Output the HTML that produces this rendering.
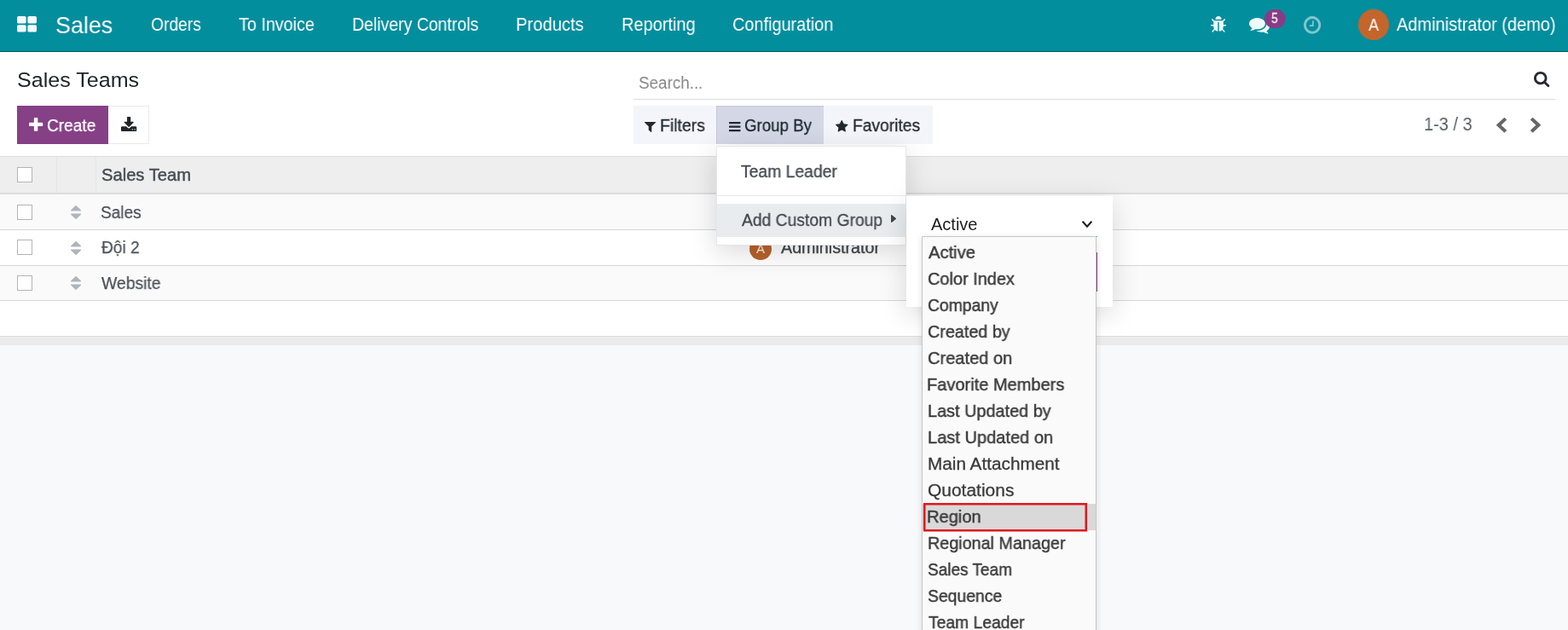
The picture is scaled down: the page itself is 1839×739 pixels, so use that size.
<!DOCTYPE html>
<html lang="en">
<head>
<meta charset="utf-8">
<title>Sales Teams</title>
<style>
*{box-sizing:border-box;margin:0;padding:0}
html,body{width:1839px;height:739px;overflow:hidden}
body{position:relative;background:#f8f9fa;font-family:"Liberation Sans",sans-serif;font-size:19.5px;color:#4c4c4c}
.abs,.ic{position:absolute}
.ic{display:block;overflow:visible}
.t{position:absolute;white-space:nowrap;line-height:1;transform-origin:0 50%;will-change:transform}
#nav{position:absolute;left:0;top:0;width:1839px;height:61px;background:#038e9e;border-bottom:1px solid #075c66}
#cp{position:absolute;left:0;top:61px;width:1839px;height:122px;background:#fff}
.hdr{position:absolute;left:0;top:183px;width:1839px;height:45px;background:#eeeeee;border-top:1px solid #dcdcdc;border-bottom:2px solid #dcdcdc}
.colsep{position:absolute;top:184px;width:1px;height:42px;background:#e5e5e5}
.row{position:absolute;left:0;width:1839px;border-bottom:1px solid #d6d6d6}
.row.odd{background:#fafafa}
.row.even{background:#fff}
.cb{position:absolute;left:20px;width:18px;height:18px;border:1px solid #b4b4b4;background:#fff}
.tfill{position:absolute;left:0;top:353px;width:1839px;height:41px;background:#fff}
.foot{position:absolute;left:0;top:394px;width:1839px;height:11px;background:#ebebeb;border-top:1px solid #dcdcdc}
.btn-create{position:absolute;left:20px;top:124px;width:107px;height:45px;background:#864086}
.btn-dl{position:absolute;left:127px;top:124px;width:48px;height:45px;background:#fff;border:1px solid #e9e9ea;border-left:0}
.sline{position:absolute;left:743px;top:116px;width:1081px;height:1px;background:#dcdcdc}
.fb{position:absolute;top:124px;height:45px;background:#f4f5fa}
.fb.on{background:#d4d8e6;box-shadow:inset 1px 1px 1px rgba(0,0,0,.07)}
.avatar{position:absolute;border-radius:50%;background:#c4652c}
.badge{position:absolute;left:1482.5px;top:11.4px;width:25px;height:21.6px;border-radius:11px;background:#873d86}
.dd{position:absolute;left:840px;top:171px;width:223px;height:117px;background:#fff;border:1px solid #e4e6ea;box-shadow:0 8px 30px rgba(0,0,0,.15)}
.dd .div{position:absolute;left:0;top:57px;width:221px;height:1px;background:#e6e8eb}
.dd .hl{position:absolute;left:0;top:67px;width:221px;height:39px;background:#e9ecef}
.sub{position:absolute;left:1062.5px;top:229.5px;width:242.5px;height:130.5px;background:#fff;box-shadow:0 8px 30px rgba(0,0,0,.15)}
.selline{position:absolute;left:1080.5px;top:277px;width:206.5px;height:1px;background:#5aa5a2}
.apply{position:absolute;left:1081px;top:296px;width:206px;height:46px;background:#864086}
.pop{position:absolute;left:1081px;top:277px;width:205px;height:470px;background:#fafafa;border:1px solid #c6c6c6;box-shadow:0 2px 8px rgba(0,0,0,.12)}
.ohl{position:absolute;left:1082px;top:591px;width:203px;height:31px;background:#d9d9d9}
.red{position:absolute;left:1082.75px;top:589.75px;width:192px;height:33.5px;overflow:visible}
</style>
</head>
<body>
<div id="nav">
  <svg class="ic" style="left:20.0px;top:19.3px;" width="23.0" height="18.6" viewBox="64 128 1664 1408" preserveAspectRatio="none"><path fill="#f4fbfb" d="M832 1024v384q0 52-38 90t-90 38h-512q-52 0-90-38t-38-90v-384q0-52 38-90t90-38h512q52 0 90 38t38 90zm0-768v384q0 52-38 90t-90 38h-512q-52 0-90-38t-38-90v-384q0-52 38-90t90-38h512q52 0 90 38t38 90zm896 768v384q0 52-38 90t-90 38h-512q-52 0-90-38t-38-90v-384q0-52 38-90t90-38h512q52 0 90 38t38 90zm0-768v384q0 52-38 90t-90 38h-512q-52 0-90-38t-38-90v-384q0-52 38-90t90-38h512q52 0 90 38t38 90z"/></svg>
  <span class="t" style="left:64.58px;top:16px;font-size:28px;color:#ffffff;transform:scaleX(0.9592)">Sales</span>
  <span class="t" style="left:177.06px;top:19px;font-size:21.5px;color:#ffffff;transform:scaleX(0.8954)">Orders</span>
  <span class="t" style="left:280.49px;top:19px;font-size:21.5px;color:#ffffff;transform:scaleX(0.9184)">To Invoice</span>
  <span class="t" style="left:413.40px;top:19px;font-size:21.5px;color:#ffffff;transform:scaleX(0.9052)">Delivery Controls</span>
  <span class="t" style="left:605.36px;top:19px;font-size:21.5px;color:#ffffff;transform:scaleX(0.9399)">Products</span>
  <span class="t" style="left:728.93px;top:19px;font-size:21.5px;color:#ffffff;transform:scaleX(0.9293)">Reporting</span>
  <span class="t" style="left:858.88px;top:19px;font-size:21.5px;color:#ffffff;transform:scaleX(0.9247)">Configuration</span>
  <svg class="ic" style="left:1420.2px;top:18.8px;" width="18.1" height="18.8" viewBox="96 64 1600 1568" preserveAspectRatio="none"><path fill="#eef9fa" d="M1696 960q0 26-19 45t-45 19h-224q0 171-67 290l208 209q19 19 19 45t-19 45q-18 19-45 19t-45-19l-198-197q-5 5-15 13t-42 28.500-65 36.500-82 29-97 13v-896h-128v896q-51 0-101.500-13.500t-87-33-66-39-43.500-32.500l-15-14-183 207q-20 21-48 21-24 0-43-16-19-18-20.500-44.500t15.500-46.500l202-227q-58-114-58-274h-224q-26 0-45-19t-19-45 19-45 45-19h224v-294l-173-173q-19-19-19-45t19-45 45-19 45 19l173 173h844l173-173q19-19 45-19t45 19 19 45-19 45l-173 173v294h224q26 0 45 19t19 45zm-480-576h-640q0-133 93.500-226.500t226.500-93.500 226.500 93.500 93.500 226.500z"/></svg>
  <svg class="ic" style="left:1465.0px;top:21.2px;" width="24.0" height="18.4" viewBox="0 256 1792 1408.111083984375" preserveAspectRatio="none"><path fill="#eef9fa" d="M1408 768q0 139-94 257t-256.500 186.500-353.500 68.500q-86 0-176-16-124 88-278 128-36 9-86 16h-3q-11 0-20.500-8t-11.500-21q-1-3-1-6.500t.5-6.500 2-6l2.500-5 3.500-5.500 4-5 4.500-5 4-4.500q5-6 23-25t26-29.500 22.500-29 25-38.500 20.500-44q-124-72-195-177t-71-224q0-139 94-257t256.500-186.500 353.500-68.500 353.500 68.500 256.500 186.500 94 257zm384 256q0 120-71 224.500t-195 176.500q10 24 20.500 44t25 38.500 22.500 29 26 29.500 23 25q1 1 4 4.500t4.500 5 4 5 3.500 5.500l2.500 5 2 6 .5 6.500-1 6.500q-3 14-13 22t-22 7q-50-7-86-16-154-40-278-128-90 16-176 16-271 0-472-132 58 4 88 4 161 0 309-45t264-129q125-92 192-212t67-254q0-77-23-152 129 71 204 178t75 230z"/></svg>
  <div class="badge"></div>
  <span class="t" style="left:1491.06px;top:14px;font-size:16px;color:#f6eaf4;transform:scaleX(0.8650);-webkit-text-stroke:0.3px #f6eaf4">5</span>
  <svg class="ic" style="left:1528.6px;top:19.3px;opacity:.5" width="20.2" height="20.7" viewBox="128 128 1536 1536" preserveAspectRatio="none"><path fill="#ffffff" d="M1024 544v448q0 14-9 23t-23 9h-320q-14 0-23-9t-9-23v-64q0-14 9-23t23-9h224v-352q0-14 9-23t23-9h64q14 0 23 9t9 23zm416 352q0-148-73-273t-198-198-273-73-273 73-198 198-73 273 73 273 198 198 273 73 273-73 198-198 73-273zm224 0q0 209-103 385.500t-279.500 279.500-385.500 103-385.500-103-279.500-279.500-103-385.500 103-385.500 279.500-279.500 385.500-103 385.500 103 279.500 279.500 103 385.500z"/></svg>
  <div class="avatar" style="left:1593px;top:11px;width:35.5px;height:36px"></div>
  <span class="t" style="left:1604.99px;top:20px;font-size:19.5px;color:#ffffff;transform:scaleX(0.9327)">A</span>
  <span class="t" style="left:1637.50px;top:19px;font-size:21.5px;color:#ffffff;transform:scaleX(0.9299)">Administrator (demo)</span>
</div>
<div id="cp"></div>
<span class="t" style="left:20.14px;top:82px;font-size:24.5px;color:#212529;transform:scaleX(1.0232)">Sales Teams</span>
<div class="btn-create"></div>
<svg class="ic" style="left:34.4px;top:138.4px;" width="16.2" height="15.8" viewBox="192 128 1408 1408" preserveAspectRatio="none"><path fill="#ffffff" d="M1600 736v192q0 40-28 68t-68 28h-416v416q0 40-28 68t-68 28h-192q-40 0-68-28t-28-68v-416h-416q-40 0-68-28t-28-68v-192q0-40 28-68t68-28h416v-416q0-40 28-68t68-28h192q40 0 68 28t28 68v416h416q40 0 68 28t28 68z"/></svg>
<span class="t" style="left:55.06px;top:137px;font-size:20px;color:#ffffff;transform:scaleX(0.9538);-webkit-text-stroke:0.25px #ffffff">Create</span>
<div class="btn-dl"></div>
<svg class="ic" style="left:141.75px;top:137.0px;" width="18.25" height="17.0" viewBox="64 0 1664 1536" preserveAspectRatio="none"><path fill="#212529" d="M1344 1344q0-26-19-45t-45-19-45 19-19 45 19 45 45 19 45-19 19-45zm256 0q0-26-19-45t-45-19-45 19-19 45 19 45 45 19 45-19 19-45zm128-224v320q0 40-28 68t-68 28h-1472q-40 0-68-28t-28-68v-320q0-40 28-68t68-28h465l135 136q58 56 136 56t136-56l136-136h464q40 0 68 28t28 68zm-325-569q17 41-14 70l-448 448q-18 19-45 19t-45-19l-448-448q-31-29-14-70 17-39 59-39h256v-448q0-26 19-45t45-19h256q26 0 45 19t19 45v448h256q42 0 59 39z"/></svg>
<span class="t" style="left:749.14px;top:88px;font-size:19.5px;color:#858585;transform:scaleX(0.9659)">Search...</span>
<svg class="ic" style="left:1798.6px;top:84.4px;" width="18.3" height="18.1" viewBox="64 128 1664 1664" preserveAspectRatio="none"><path fill="#252b31" d="M1216 832q0-185-131.500-316.500t-316.500-131.500-316.500 131.500-131.500 316.500 131.500 316.500 316.500 131.500 316.500-131.500 131.500-316.500zm512 832q0 52-38 90t-90 38q-54 0-90-38l-343-342q-179 124-399 124-143 0-273.500-55.500t-225-150-150-225-55.500-273.500 55.500-273.500 150-225 225-150 273.500-55.500 273.500 55.500 225 150 150 225 55.500 273.500q0 220-124 399l343 343q37 37 37 90z"/></svg>
<div class="sline"></div>
<div class="fb" style="left:743px;width:97px"></div>
<div class="fb on" style="left:840px;width:126px"></div>
<div class="fb" style="left:966px;width:128px"></div>
<svg class="ic" style="left:756.0px;top:142.5px;" width="13.0" height="12.0" viewBox="190.9791717529297 256 1410.041748046875 1408" preserveAspectRatio="none"><path fill="#212930" d="M1595 295q17 41-14 70l-493 493v742q0 42-39 59-13 5-25 5-27 0-45-19l-256-256q-19-19-19-45v-486l-493-493q-31-29-14-70 17-39 59-39h1280q42 0 59 39z"/></svg>
<span class="t" style="left:774.15px;top:137px;font-size:20px;color:#212930;transform:scaleX(0.9708);-webkit-text-stroke:0.3px #212930">Filters</span>
<svg class="ic" style="left:854.5px;top:142.7px;" width="13.5" height="11.2" viewBox="128 256 1536 1280" preserveAspectRatio="none"><path fill="#212930" d="M1664 1344v128q0 26-19 45t-45 19h-1408q-26 0-45-19t-19-45v-128q0-26 19-45t45-19h1408q26 0 45 19t19 45zm0-512v128q0 26-19 45t-45 19h-1408q-26 0-45-19t-19-45v-128q0-26 19-45t45-19h1408q26 0 45 19t19 45zm0-512v128q0 26-19 45t-45 19h-1408q-26 0-45-19t-19-45v-128q0-26 19-45t45-19h1408q26 0 45 19t19 45z"/></svg>
<span class="t" style="left:873.08px;top:137px;font-size:20px;color:#212930;transform:scaleX(0.9341);-webkit-text-stroke:0.3px #212930">Group By</span>
<svg class="ic" style="left:979.5px;top:141.2px;" width="14.5" height="13.5" viewBox="64 32 1664 1587" preserveAspectRatio="none"><path fill="#212930" d="M1728 647q0 22-26 48l-363 354 86 500q1 7 1 20 0 21-10.500 35.500t-30.500 14.500q-19 0-40-12l-449-236-449 236q-22 12-40 12-21 0-31.500-14.500t-10.500-35.500q0-6 2-20l86-500-364-354q-25-27-25-48 0-37 56-46l502-73 225-455q19-41 49-41t49 41l225 455 502 73q56 9 56 46z"/></svg>
<span class="t" style="left:999.76px;top:137px;font-size:20px;color:#212930;transform:scaleX(0.9624);-webkit-text-stroke:0.3px #212930">Favorites</span>
<span class="t" style="left:1670.20px;top:136px;font-size:21.5px;color:#5a6167;transform:scaleX(0.9285)">1-3 / 3</span>
<svg class="ic" style="left:1755.0px;top:137.6px;" width="12.0" height="17.5" viewBox="410 26 1036 1612" preserveAspectRatio="none"><path fill="#666666" d="M1427 301l-531 531 531 531q19 19 19 45t-19 45l-166 166q-19 19-45 19t-45-19l-742-742q-19-19-19-45t19-45l742-742q19-19 45-19t45 19l166 166q19 19 19 45t-19 45z"/></svg>
<svg class="ic" style="left:1795.0px;top:137.6px;" width="12.0" height="17.5" viewBox="346 26 1036 1612" preserveAspectRatio="none"><path fill="#666666" d="M1363 877l-742 742q-19 19-45 19t-45-19l-166-166q-19-19-19-45t19-45l531-531-531-531q-19-19-19-45t19-45l166-166q19-19 45-19t45 19l742 742q19 19 19 45t-19 45z"/></svg>

<div class="hdr"></div>
<div class="colsep" style="left:66px"></div>
<div class="colsep" style="left:112px"></div>
<div class="cb" style="top:196px"></div>
<span class="t" style="left:118.84px;top:195px;font-size:20px;color:#474d53;transform:scaleX(1.0083);-webkit-text-stroke:0.45px #474d53">Sales Team</span>
<div class="row odd" style="top:228px;height:42px"></div>
<div class="row even" style="top:270px;height:42px"></div>
<div class="row odd" style="top:312px;height:41px"></div>
<div class="tfill"></div>
<div class="foot"></div>
<div class="cb" style="top:240px"></div>
<div class="cb" style="top:281px"></div>
<div class="cb" style="top:323px"></div>
<svg class="ic" style="left:83.3px;top:241.0px;" width="12.1" height="16.0" viewBox="384 192 1024 1408" preserveAspectRatio="none"><path fill="#adb5bd" d="M1408 1088q0 26-19 45l-448 448q-19 19-45 19t-45-19l-448-448q-19-19-19-45t19-45 45-19h896q26 0 45 19t19 45zm0-384q0 26-19 45t-45 19h-896q-26 0-45-19t-19-45 19-45l448-448q19-19 45-19t45 19l448 448q19 19 19 45z"/></svg>
<svg class="ic" style="left:83.3px;top:282.5px;" width="12.1" height="16.0" viewBox="384 192 1024 1408" preserveAspectRatio="none"><path fill="#adb5bd" d="M1408 1088q0 26-19 45l-448 448q-19 19-45 19t-45-19l-448-448q-19-19-19-45t19-45 45-19h896q26 0 45 19t19 45zm0-384q0 26-19 45t-45 19h-896q-26 0-45-19t-19-45 19-45l448-448q19-19 45-19t45 19l448 448q19 19 19 45z"/></svg>
<svg class="ic" style="left:83.3px;top:324.0px;" width="12.1" height="16.0" viewBox="384 192 1024 1408" preserveAspectRatio="none"><path fill="#adb5bd" d="M1408 1088q0 26-19 45l-448 448q-19 19-45 19t-45-19l-448-448q-19-19-19-45t19-45 45-19h896q26 0 45 19t19 45zm0-384q0 26-19 45t-45 19h-896q-26 0-45-19t-19-45 19-45l448-448q19-19 45-19t45 19l448 448q19 19 19 45z"/></svg>
<span class="t" style="left:117.75px;top:240px;font-size:19.5px;color:#4a5056;transform:scaleX(0.9766);-webkit-text-stroke:0.25px #4a5056">Sales</span>
<span class="t" style="left:119.32px;top:281px;font-size:19.5px;color:#4a5056;transform:scaleX(0.9801);-webkit-text-stroke:0.25px #4a5056">Đội 2</span>
<span class="t" style="left:118.91px;top:323px;font-size:19.5px;color:#4a5056;transform:scaleX(0.9917);-webkit-text-stroke:0.25px #4a5056">Website</span>
<div class="avatar" style="left:879px;top:279px;width:26px;height:26px;background:#b8622b"></div>
<span class="t" style="left:887.07px;top:284px;font-size:15.5px;color:#fff4ea;transform:scaleX(0.9573)">A</span>
<span class="t" style="left:915.72px;top:281px;font-size:19.5px;color:#42484e;transform:scaleX(1.0100);-webkit-text-stroke:0.35px #42484e">Administrator</span>

<div class="dd">
  <div class="div"></div>
  <div class="hl"></div>
</div>
<span class="t" style="left:869.42px;top:192px;font-size:19.5px;color:#42484e;transform:scaleX(0.9916);-webkit-text-stroke:0.3px #42484e">Team Leader</span>
<span class="t" style="left:869.52px;top:249px;font-size:19.5px;color:#42484e;transform:scaleX(0.9890);-webkit-text-stroke:0.3px #42484e">Add Custom Group</span>
<svg class="ic" style="left:1044.5px;top:252.0px;" width="6.0" height="9.0" viewBox="576 384 576 1024" preserveAspectRatio="none"><path fill="#3f464c" d="M1152 896q0 26-19 45l-448 448q-19 19-45 19t-45-19-19-45v-896q0-26 19-45t45-19 45 19l448 448q19 19 19 45z"/></svg>
<div class="sub"></div>
<span class="t" style="left:1092.07px;top:253px;font-size:20px;color:#1d1d1d;transform:scaleX(0.9993)">Active</span>
<svg class="ic" style="left:1268px;top:258px" width="14" height="11" viewBox="0 0 14 11"><path d="M1.6 1.8 L7 7.6 L12.4 1.8" fill="none" stroke="#1d1d1d" stroke-width="2.1"/></svg>
<div class="apply"></div>
<div class="selline"></div>
<div class="pop"></div>
<div class="ohl"></div>
<svg class="red" viewBox="0 0 192 33.5"><rect x="1.25" y="1.25" width="189.5" height="31" fill="none" stroke="#e5161c" stroke-width="2.5"/></svg>
<span class="t" style="left:1088.63px;top:286px;font-size:20.5px;color:#3a3a3a;transform:scaleX(0.9837);-webkit-text-stroke:0.45px #3a3a3a">Active</span>
    <span class="t" style="left:1088.06px;top:317px;font-size:20.5px;color:#3a3a3a;transform:scaleX(0.9723);-webkit-text-stroke:0.45px #3a3a3a">Color Index</span>
    <span class="t" style="left:1088.01px;top:348px;font-size:20.5px;color:#3a3a3a;transform:scaleX(0.9425);-webkit-text-stroke:0.45px #3a3a3a">Company</span>
    <span class="t" style="left:1087.93px;top:379px;font-size:20.5px;color:#3a3a3a;transform:scaleX(0.9634);-webkit-text-stroke:0.45px #3a3a3a">Created by</span>
    <span class="t" style="left:1088.06px;top:410px;font-size:20.5px;color:#3a3a3a;transform:scaleX(0.9778);-webkit-text-stroke:0.45px #3a3a3a">Created on</span>
    <span class="t" style="left:1087.46px;top:441px;font-size:20.5px;color:#3a3a3a;transform:scaleX(0.9768);-webkit-text-stroke:0.45px #3a3a3a">Favorite Members</span>
    <span class="t" style="left:1087.52px;top:472px;font-size:20.5px;color:#3a3a3a;transform:scaleX(0.9689);-webkit-text-stroke:0.45px #3a3a3a">Last Updated by</span>
    <span class="t" style="left:1087.52px;top:503px;font-size:20.5px;color:#3a3a3a;transform:scaleX(0.9778);-webkit-text-stroke:0.45px #3a3a3a">Last Updated on</span>
    <span class="t" style="left:1087.83px;top:534px;font-size:20.5px;color:#3a3a3a;transform:scaleX(1.0122);-webkit-text-stroke:0.3px #3a3a3a">Main Attachment</span>
    <span class="t" style="left:1088.41px;top:565px;font-size:20.5px;color:#3a3a3a;transform:scaleX(1.0225);-webkit-text-stroke:0.3px #3a3a3a">Quotations</span>
    <span class="t" style="left:1087.46px;top:596px;font-size:20.5px;color:#3a3a3a;transform:scaleX(0.9804);-webkit-text-stroke:0.45px #3a3a3a">Region</span>
    <span class="t" style="left:1087.64px;top:627px;font-size:20.5px;color:#3a3a3a;transform:scaleX(0.9641);-webkit-text-stroke:0.45px #3a3a3a">Regional Manager</span>
    <span class="t" style="left:1088.07px;top:658px;font-size:20.5px;color:#3a3a3a;transform:scaleX(0.9276);-webkit-text-stroke:0.45px #3a3a3a">Sales Team</span>
    <span class="t" style="left:1087.52px;top:689px;font-size:20.5px;color:#3a3a3a;transform:scaleX(0.9438);-webkit-text-stroke:0.45px #3a3a3a">Sequence</span>
    <span class="t" style="left:1088.67px;top:720px;font-size:20.5px;color:#3a3a3a;transform:scaleX(0.9409);-webkit-text-stroke:0.45px #3a3a3a">Team Leader</span>
</body>
</html>
